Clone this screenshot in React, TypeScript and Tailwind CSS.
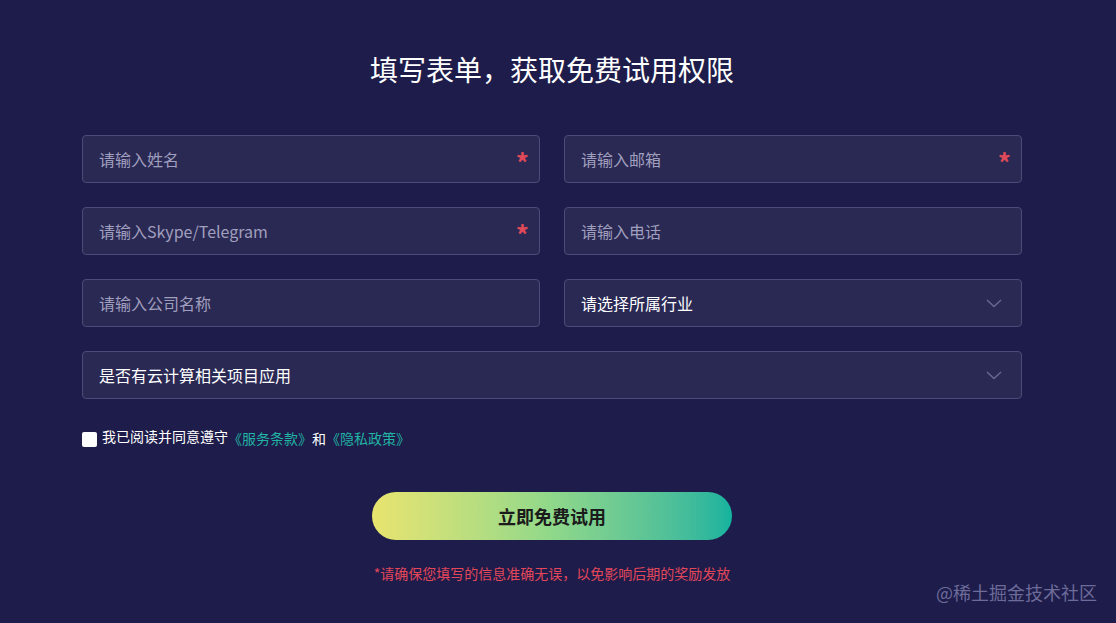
import { useState } from "react";

const font = { fontFamily: '"Microsoft YaHei", "Noto Sans CJK SC", "Noto Sans", sans-serif' };

function Field({ placeholder, required }: { placeholder: string; required?: boolean }) {
  return (
    <div className="relative h-12 rounded-[4px] border border-[#4b4a78] bg-[#2a2954] flex items-center">
      <input
        placeholder={placeholder}
        className="w-full h-full bg-transparent px-4 text-base text-white placeholder:text-[#a09fbd] outline-none"
        style={font}
      />
      {required && (
        <span className="absolute right-[10px] top-[13px] text-[26px] leading-none font-bold text-[#e04a58]">*</span>
      )}
    </div>
  );
}

function SelectField({ label }: { label: string }) {
  return (
    <div className="h-12 rounded-[4px] border border-[#4b4a78] bg-[#2a2954] flex items-center justify-between pl-4 pr-[18px]">
      <span className="text-base text-white">{label}</span>
      <svg width="18" height="18" viewBox="0 0 18 18" fill="none">
        <path d="M2 6 L9 12.5 L16 6" stroke="#6b6a93" strokeWidth="1.3" />
      </svg>
    </div>
  );
}

export default function App() {
  const [agree, setAgree] = useState(false);

  return (
    <div className="w-full h-[623px] bg-[#1e1c4a] overflow-hidden relative" style={font}>
      <div className="flex justify-center pr-[12px]">
        <div className="w-[940px] flex flex-col">
          <h1 className="mt-[49px] text-center text-[28px] leading-[40px] text-white">填写表单，获取免费试用权限</h1>

          <div className="mt-[46px] grid grid-cols-2 gap-x-6 gap-y-6">
            <Field placeholder="请输入姓名" required />
            <Field placeholder="请输入邮箱" required />
            <Field placeholder="请输入Skype/Telegram" required />
            <Field placeholder="请输入电话" />
            <Field placeholder="请输入公司名称" />
            <SelectField label="请选择所属行业" />
            <div className="col-span-2">
              <SelectField label="是否有云计算相关项目应用" />
            </div>
          </div>

          <label className="mt-[29px] flex items-center cursor-pointer text-[14px]">
            <input
              type="checkbox"
              checked={agree}
              onChange={(e) => setAgree(e.target.checked)}
              className="w-[15px] h-[15px] m-0 mr-[5px] appearance-none bg-white rounded-[2px] mt-[2px]"
            />
            <span className="text-white -mt-[4px]">我已阅读并同意遵守</span>
            <span className="text-[#21b3a4]">《服务条款》</span>
            <span className="text-white">和</span>
            <span className="text-[#21b3a4]">《隐私政策》</span>
          </label>

          <button className="mt-[43px] mx-auto w-[360px] h-12 rounded-full bg-gradient-to-r from-[#e8e46e] via-[#8fd88a] to-[#12b39e] text-[18px] font-bold text-[#1b1b1b]">
            立即免费试用
          </button>

          <p className="mt-[23px] text-center text-[14px] text-[#e2475a]">*请确保您填写的信息准确无误，以免影响后期的奖励发放</p>
        </div>
      </div>

      <div className="absolute right-[19px] top-[579px] text-[18px] text-[#6c6b99]">@稀土掘金技术社区</div>
    </div>
  );
}
